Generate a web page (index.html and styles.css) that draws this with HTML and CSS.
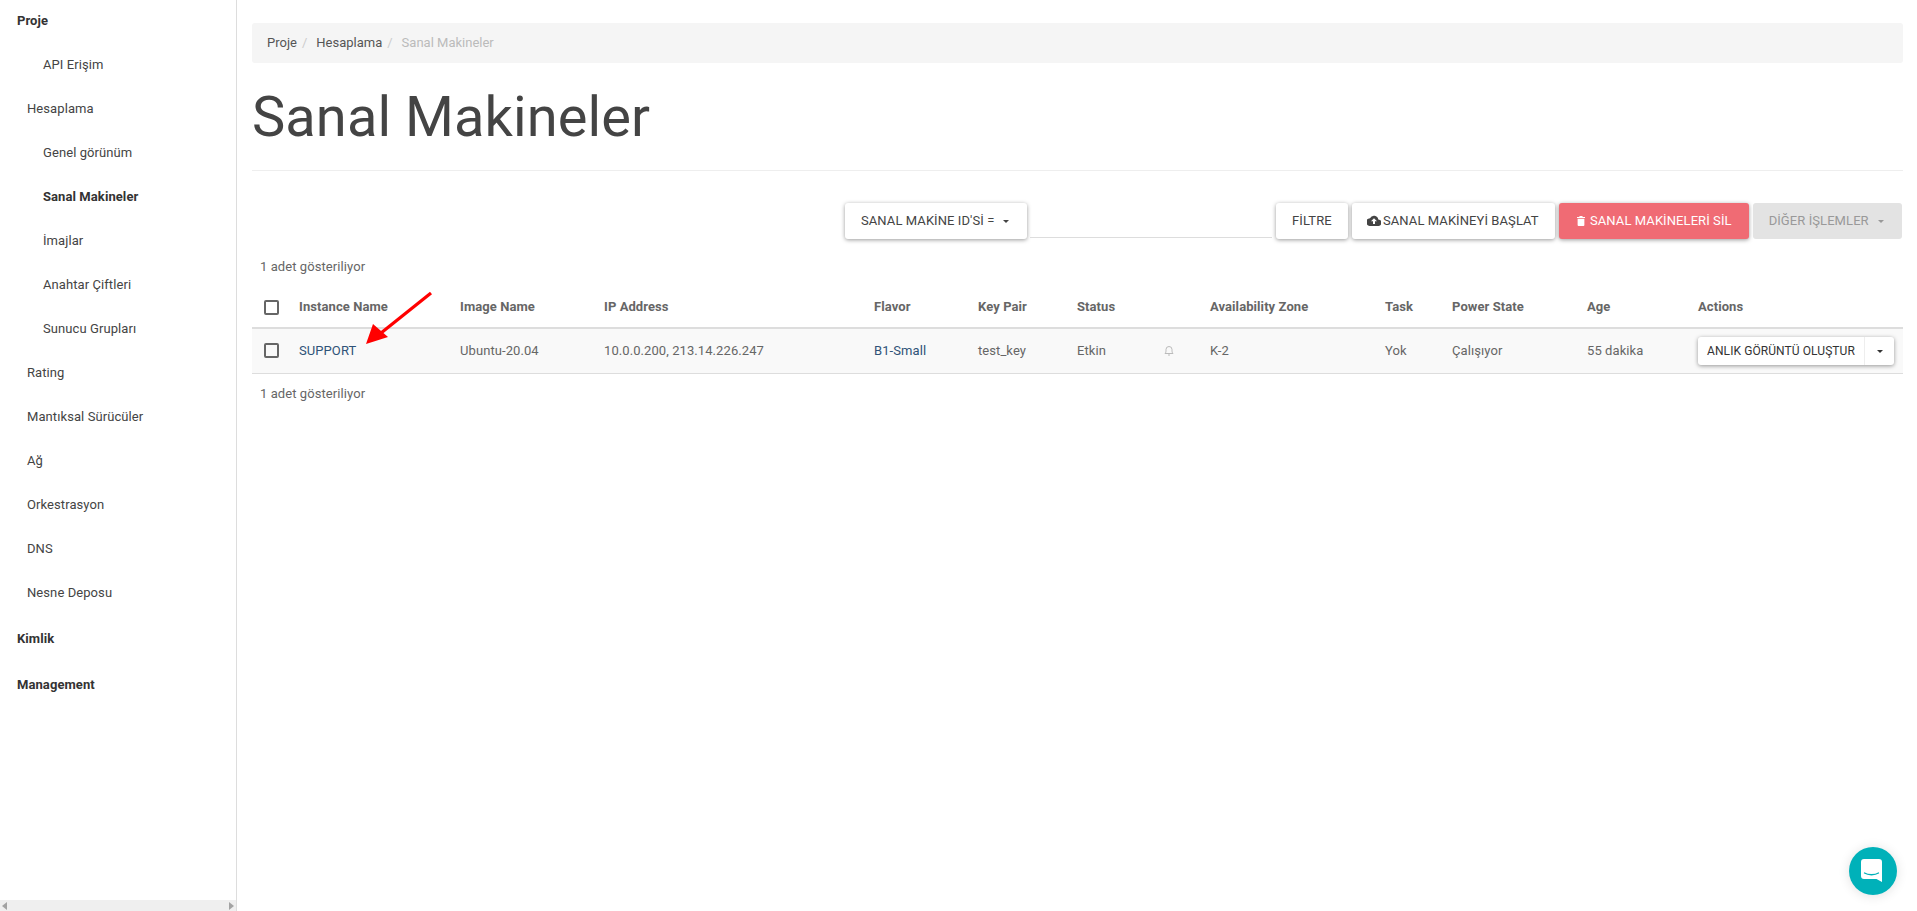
FILE: index.html
```html
<!DOCTYPE html>
<html lang="tr">
<head>
<meta charset="utf-8">
<title>Sanal Makineler</title>
<link rel="stylesheet" href="styles.css">
</head>
<body>
<aside class="sidebar">
  <nav class="nav">
    <a class="nav-head nav-first">Proje</a>
    <a class="nav-sub">API Erişim</a>
    <a class="nav-group">Hesaplama</a>
    <a class="nav-sub">Genel görünüm</a>
    <a class="nav-sub nav-active">Sanal Makineler</a>
    <a class="nav-sub">İmajlar</a>
    <a class="nav-sub">Anahtar Çiftleri</a>
    <a class="nav-sub">Sunucu Grupları</a>
    <a class="nav-group">Rating</a>
    <a class="nav-group">Mantıksal Sürücüler</a>
    <a class="nav-group">Ağ</a>
    <a class="nav-group">Orkestrasyon</a>
    <a class="nav-group">DNS</a>
    <a class="nav-group">Nesne Deposu</a>
    <a class="nav-head">Kimlik</a>
    <a class="nav-head">Management</a>
  </nav>
  <div class="hscroll">
    <svg width="6" height="8" viewBox="0 0 6 8"><path d="M5 0v8L0 4z" fill="#a3a3a3"/></svg>
    <svg width="6" height="8" viewBox="0 0 6 8"><path d="M1 0v8l5-4z" fill="#a3a3a3"/></svg>
  </div>
</aside>
<main class="main">
  <ol class="breadcrumb">
    <li>Proje</li>
    <li class="sep">/</li>
    <li>Hesaplama</li>
    <li class="sep">/</li>
    <li class="bc-current">Sanal Makineler</li>
  </ol>
  <header class="page-header"><h1>Sanal Makineler</h1></header>
  <div class="toolbar">
    <button class="btn btn-filter">SANAL MAKİNE ID'Sİ = <span class="caret caret-gap"></span></button>
    <div class="search-line"></div>
    <button class="btn">FİLTRE</button>
    <button class="btn btn-icon">
      <svg class="cloud" width="14" height="11" viewBox="0 0 14 11"><path fill="#444" d="M11.3 4.4A4.4 4.4 0 0 0 3 3.2 3.9 3.900 0 0 0 3.500 11h7.400a3.300 3.300 0 0 0 .4-6.600zM8 6.200V9H6V6.200H4l3-3 3 3H8z"/></svg>
      SANAL MAKİNEYİ BAŞLAT
    </button>
    <button class="btn btn-danger btn-icon">
      <svg class="trash" width="8" height="10" viewBox="0 0 9 11"><path fill="#fff" d="M3 0h3l.5 1H9v1.200H0V1h2.500zM.7 3h7.600v7a1 1 0 0 1-1 1H1.700a1 1 0 0 1-1-1z"/></svg>
      SANAL MAKİNELERİ SİL
    </button>
    <button class="btn btn-disabled">DİĞER İŞLEMLER <span class="caret caret-gap"></span></button>
  </div>
  <p class="count count-top">1 adet gösteriliyor</p>
  <table class="table">
    <colgroup>
      <col class="c-check"><col class="c-name"><col class="c-image"><col class="c-ip"><col class="c-flavor">
      <col class="c-key"><col class="c-status"><col class="c-bell"><col class="c-zone"><col class="c-task">
      <col class="c-power"><col class="c-age"><col class="c-actions">
    </colgroup>
    <thead>
      <tr>
        <th><span class="check"></span></th>
        <th>Instance Name</th>
        <th>Image Name</th>
        <th>IP Address</th>
        <th>Flavor</th>
        <th>Key Pair</th>
        <th>Status</th>
        <th></th>
        <th>Availability Zone</th>
        <th>Task</th>
        <th>Power State</th>
        <th>Age</th>
        <th>Actions</th>
      </tr>
    </thead>
    <tbody>
      <tr>
        <td><span class="check"></span></td>
        <td><a class="link">SUPPORT</a></td>
        <td>Ubuntu-20.04</td>
        <td>10.0.0.200, 213.14.226.247</td>
        <td><a class="link">B1-Small</a></td>
        <td>test_key</td>
        <td>Etkin</td>
        <td class="bell-cell">
          <svg width="10" height="11" viewBox="0 0 10 11"><path fill="none" stroke="#bbb" d="M1 8.500c1-1 1-2 1-4a3 3 0 0 1 6 0c0 2 0 3 1 4zM4 10h2"/></svg>
        </td>
        <td>K-2</td>
        <td>Yok</td>
        <td>Çalışıyor</td>
        <td>55 dakika</td>
        <td>
          <div class="action-group">
            <button class="action-main">ANLIK GÖRÜNTÜ OLUŞTUR</button>
            <button class="action-toggle"><span class="caret"></span></button>
          </div>
        </td>
      </tr>
    </tbody>
  </table>
  <p class="count count-bottom">1 adet gösteriliyor</p>
</main>
<svg class="arrow" width="80" height="60" viewBox="0 0 80 60">
  <path d="M73 2 L18 46" stroke="#f00" stroke-width="3.200" fill="none"/>
  <path d="M8 53 L15 33 L30 46 Z" fill="#f00"/>
</svg>
<div class="chat">
  <svg width="24" height="24" viewBox="0 0 24 24">
    <path fill="#fff" d="M3 0h15a3 3 0 0 1 3 3v20l-5.500-3H3a3 3 0 0 1-3-3V3a3 3 0 0 1 3-3z"/>
    <path fill="none" stroke="#00b1b9" stroke-width="1.300" stroke-linecap="round" d="M3.500 14c3.500 2.300 10.500 2.300 14 0"/>
  </svg>
</div>
</body>
</html>
```
FILE: styles.css
```css
* { box-sizing: border-box; }
html, body { height: 100%; margin: 0; }
body {
  display: flex;
  overflow: hidden;
  background: #fff;
  color: #666;
  font: 400 13px/20px Roboto, "Liberation Sans", sans-serif;
  letter-spacing: .08px;
}
.sidebar {
  flex: 0 0 237px;
  height: 100vh;
  border-right: 1px solid #ddd;
  display: flex;
  flex-direction: column;
}
.nav { flex: 1; display: flex; flex-direction: column; }
.nav a { display: flex; align-items: center; height: 44px; color: #444; }
.nav .nav-head { height: 46px; padding: 2px 0 0 17px; font-weight: 700; color: #333; }
.nav .nav-first { height: 41px; padding-top: 0; margin-bottom: 2px; }
.nav-group { padding-left: 27px; }
.nav-sub { padding-left: 43px; }
.nav .nav-active { font-weight: 700; color: #333; }
.hscroll {
  height: 11px;
  background: #efefef;
  display: flex;
  justify-content: space-between;
  align-items: center;
  padding: 0 2px;
}
.main { flex: 1; min-width: 0; padding: 23px 14px 0 15px; }
.breadcrumb {
  display: flex;
  list-style: none;
  margin: 0;
  height: 40px;
  align-items: center;
  padding: 0 15px;
  background: #f5f5f5;
  border-radius: 3px;
  color: #555;
  letter-spacing: 0;
}
.sep { color: #ccc; padding: 0 9px 0 5px; }
.bc-current { color: #bbb; }
.page-header { height: 108px; border-bottom: 1px solid #eee; padding-top: 21px; }
h1 {
  margin: 0;
  font-size: 56px;
  line-height: 66px;
  font-weight: 400;
  color: #444;
}
.toolbar { display: flex; align-items: flex-end; margin-top: 32px; height: 36px; padding-right: 1px; }
.btn {
  height: 36px;
  border: 0;
  border-radius: 3px;
  background: #fff;
  color: #444;
  font: 400 13px/20px Roboto, "Liberation Sans", sans-serif;
  letter-spacing: .08px;
  padding: 0 16px;
  margin-left: 4px;
  box-shadow: 0 1px 4px rgba(0, 0, 0, .4);
  white-space: nowrap;
}
.btn-filter { margin-left: 593px; }
.btn-icon svg { vertical-align: -1px; }
.btn-icon .cloud { margin: 0 -1px 0 -1px; }
.btn-icon .trash { margin: 0 2px 0 2px; }
.btn-danger { background: #f06b74; color: #fff; padding-right: 17px; }
.search-line { flex: 1; height: 1px; margin: 0 0 1px 3px; background: #ddd; }
.btn-disabled { background: #e3e3e3; color: #999; box-shadow: none; }
.caret {
  display: inline-block;
  width: 0;
  height: 0;
  vertical-align: middle;
  border-top: 3px solid;
  border-left: 3px solid transparent;
  border-right: 3px solid transparent;
}
.caret-gap { margin: 0 2px 0 5px; }
.btn-disabled .caret-gap { margin-left: 6px; }
.count { margin: 0; padding-left: 8px; height: 20px; }
.count-top { margin-top: 18px; }
.count-bottom { margin-top: 10px; }
.table { width: 1651px; table-layout: fixed; border-collapse: collapse; margin-top: 8px; }
.c-check { width: 39px; }
.c-name { width: 161px; }
.c-image { width: 144px; }
.c-ip { width: 270px; }
.c-flavor { width: 104px; }
.c-key { width: 99px; }
.c-status { width: 91px; }
.c-bell { width: 42px; }
.c-zone { width: 175px; }
.c-task { width: 67px; }
.c-power { width: 135px; }
.c-age { width: 111px; }
.c-actions { width: 213px; }
th {
  height: 43px;
  padding: 2px 8px 0;
  text-align: left;
  font-weight: 700;
  border-bottom: 2px solid #ddd;
  color: #666;
}
td {
  height: 45px;
  padding: 0 8px;
  background: #f9f9f9;
  border-bottom: 1px solid #ddd;
}
.link { color: #2f5378; }
.bell-cell svg { display: block; margin-left: -4px; }
.check {
  display: block;
  width: 15px;
  height: 15px;
  margin-left: 4px;
  border: 2px solid #666;
  border-radius: 2px;
}
.action-group {
  display: flex;
  width: 196px;
  height: 28px;
  border-radius: 3px;
  background: #fff;
  box-shadow: 0 1px 4px rgba(0, 0, 0, .4);
}
.action-main, .action-toggle {
  border: 0;
  background: none;
  padding: 0;
  color: #333;
  font: 400 12px/20px Roboto, "Liberation Sans", sans-serif;
  letter-spacing: .08px;
}
.action-main { flex: 1; border-right: 1px solid #eee; }
.action-toggle { flex: 0 0 29px; }
.arrow { position: absolute; left: 358px; top: 291px; }
.chat {
  position: fixed;
  right: 20px;
  bottom: 16px;
  width: 48px;
  height: 48px;
  border-radius: 50%;
  background: #00b1b9;
  box-shadow: 0 1px 12px rgba(0, 0, 0, .12);
  display: flex;
  align-items: center;
  justify-content: center;
}
```
